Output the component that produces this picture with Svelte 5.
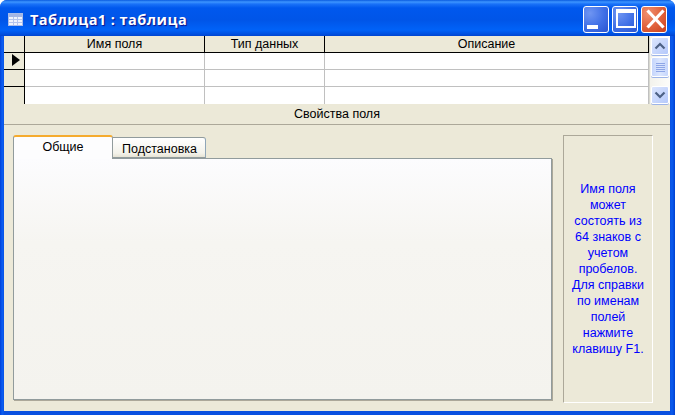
<script>
  const help = ['Имя поля','может','состоять из','64 знаков с','учетом','пробелов.','Для справки','по именам','полей','нажмите','клавишу F1.'];
  const rows = [0,1,2];
</script>

<div class="window">
  <header class="title">
    <svg class="icon" width="15" height="13" viewBox="0 0 15 13">
      <rect x="0.5" y="0.5" width="14" height="12" fill="#f0f3fc" stroke="#a9bbe8"/>
      <rect x="1" y="1" width="13" height="3" fill="#a3b5e4"/>
      <path d="M1 6.5h13M1 9.5h13M5.5 4v8M9.5 4v8" stroke="#b5c5ee" stroke-width="1" fill="none"/>
    </svg>
    <span class="caption">Таблица1 : таблица</span>
    <div class="controls">
      <button class="ctl" aria-label="min"><svg width="26" height="27" viewBox="0 0 26 27"><rect x="4" y="19" width="11" height="4" fill="#fff"/></svg></button>
      <button class="ctl" aria-label="max"><svg width="26" height="27" viewBox="0 0 26 27"><rect x="5" y="4" width="18" height="17" fill="none" stroke="#fff" stroke-width="2"/><rect x="4" y="3" width="20" height="4" fill="#fff"/></svg></button>
      <button class="ctl close" aria-label="close"><svg width="26" height="27" viewBox="0 0 26 27"><path d="M6.5 4.5L22.5 21.5M22.5 4.5L6.5 21.5" stroke="#fff" stroke-width="3.2" stroke-linecap="butt" fill="none"/></svg></button>
    </div>
  </header>

  <div class="client">
    <div class="gridwrap">
      <div class="grid">
        <div class="hd"></div>
        <div class="hd">Имя поля</div>
        <div class="hd">Тип данных</div>
        <div class="hd">Описание</div>
        {#each rows as r}
          <div class="cell-sel" class:end={r === 2}>
            {#if r === 0}
              <svg class="arrow" width="8" height="12" viewBox="0 0 8 12"><path d="M0 0L8 6L0 12Z" fill="#000"/></svg>
            {/if}
          </div>
          <div class="cell" class:end={r === 2}></div>
          <div class="cell" class:end={r === 2}></div>
          <div class="cell" class:end={r === 2}></div>
        {/each}
      </div>
      <div class="scroll">
        <div class="sbtn"><svg width="14" height="10" viewBox="0 0 14 10"><path d="M2.5 7.5L7 3L11.5 7.5" fill="none" stroke="#4d6185" stroke-width="2.2"/></svg></div>
        <div class="thumb"><svg width="9" height="9" viewBox="0 0 9 9"><path d="M0 .5h9M0 2.5h9M0 4.5h9M0 6.5h9M0 8.5h9" stroke="#8ea6e6" stroke-width="1"/></svg></div>
        <div class="track"></div>
        <div class="sbtn"><svg width="14" height="10" viewBox="0 0 14 10"><path d="M2.5 2.5L7 7L11.5 2.5" fill="none" stroke="#4d6185" stroke-width="2.2"/></svg></div>
      </div>
    </div>

    <div class="band">Свойства поля</div>

    <div class="lower">
      <div class="tabs">
        <div class="tabbar">
          <div class="tab active">Общие</div>
          <div class="tab">Подстановка</div>
        </div>
        <div class="panel"></div>
      </div>
      <div class="help">
        <div>
          {#each help as line}
            <div class="hl">{line}</div>
          {/each}
        </div>
      </div>
    </div>
  </div>
</div>

<style>
  :global(body) { margin: 0; background: #fff; }
  .window {
    width: 675px; height: 415px; box-sizing: border-box;
    display: flex; flex-direction: column;
    padding: 0 5px 4px 4px;
    border-radius: 7px 7px 0 0;
    overflow: hidden;
    background: linear-gradient(90deg, #0040d8 0, #0a5cf0 2px, #0a5cf0 3px, #0a50e0 4px, #0a50e0 670px, #0a5cf0 672px, #0040d0 675px);
    font-family: "Liberation Sans", Arial, sans-serif;
    font-size: 12.5px;
    color: #000;
  }
  .title {
    height: 36px; flex: none; box-sizing: border-box;
    margin: 0 -5px 0 -4px;
    padding: 6px 8px 0 8px;
    display: flex; align-items: flex-start;
    background: linear-gradient(180deg, #0a5be0 0, #3d95ff 2px, #1a72f8 4px, #0058ee 8px, #0055e8 20px, #0062f8 30px, #0050e0 34px, #0044d0 36px);
  }
  .icon { margin-top: 7px; flex: none; }
  .caption {
    margin-left: 7px; margin-top: 4px;
    font-family: "Open Sans", "Noto Sans", sans-serif;
    font-weight: 700; font-size: 14.5px; line-height: 20px;
    letter-spacing: 0.45px;
    color: #fff;
    text-shadow: 1px 1px 1px #0f1089;
  }
  .controls { margin-left: auto; display: flex; gap: 3px; }
  .ctl {
    width: 26px; height: 27px; padding: 0; box-sizing: border-box;
    border: 1px solid #fff; border-radius: 3px;
    background: radial-gradient(circle at 25% 25%, #6f95f2 0, #3f6fe6 55%, #2a54d0 100%);
    position: relative; display: block;
  }
  .ctl svg { position: absolute; left: -1px; top: -1px; }
  .close { background: radial-gradient(circle at 25% 25%, #f09070 0, #e0603a 55%, #c8401c 100%); }

  .client { flex: 1; display: flex; flex-direction: column; background: #ece9d8; min-height: 0; }
  .gridwrap { display: flex; height: 68px; flex: none; }
  .grid {
    flex: 1;
    display: grid;
    grid-template-columns: 21px 180px 120px 1fr;
    grid-template-rows: 17px 17px 17px 17px;
    background: #fff;
  }
  .hd {
    background: #ece9d8; text-align: center; line-height: 17px;
    border-right: 1px solid #000; border-bottom: 1px solid #000;
    box-sizing: border-box;
  }
  .cell { box-sizing: border-box; border-right: 1px solid #c0c0c0; border-bottom: 1px solid #c0c0c0; }
  .cell.end { border-bottom: none; }
  .cell-sel {
    box-sizing: border-box;
    background: #ece9d8; border-right: 1px solid #000; border-bottom: 1px solid #000;
    display: flex; align-items: flex-start; padding: 1px 0 0 8px;
  }
  .cell-sel.end { border-bottom: none; }
  .scroll {
    width: 21px; flex: none; display: flex; flex-direction: column; align-items: center;
    padding-top: 1px; box-sizing: border-box;
    background: linear-gradient(90deg, #f3f2ec, #fdfdfa);
    border-left: 1px solid #d8d8d0;
  }
  .sbtn, .thumb {
    width: 18px; box-sizing: border-box; border: 1px solid #fff; border-radius: 2px;
    background: linear-gradient(135deg, #dbe5fd, #b5c9fb);
    box-shadow: 0 1px 0 #9db4e8;
    display: flex; align-items: center; justify-content: center;
  }
  .sbtn { height: 18px; }
  .thumb { height: 20px; margin-top: 2px; background: linear-gradient(90deg, #c6d6fc, #dbe6fe, #c6d6fc); }
  .track { flex: 1; }

  .band {
    height: 21px; flex: none; box-sizing: border-box; text-align: center; line-height: 21px;
    border-bottom: 1px solid #aca899;
  }
  .lower {
    flex: 1; min-height: 0; display: flex; align-items: flex-start;
    padding: 10px 17px 0 9px;
  }
  .tabs { width: 540px; display: flex; flex-direction: column; }
  .tabbar { display: flex; align-items: flex-end; height: 23px; position: relative; z-index: 1; }
  .tab {
    box-sizing: border-box; width: 93px; height: 21px; text-align: center; line-height: 22px; padding-left: 1px;
    border: 1px solid #919b9c; border-left: none; border-right-color: #8fa6b8;
    border-radius: 0 3px 0 0;
    background: linear-gradient(180deg, #fff, #f3f2ea 80%, #e6e3d4);
  }
  .tab.active {
    width: 100px; height: 24px; margin-bottom: -1px; line-height: 21px; padding-left: 0;
    border: 1px solid #919b9c; border-bottom: none; border-top: 2px solid #f5ab2e;
    border-radius: 3px 3px 0 0;
    background: #fdfdfe;
  }
  .panel {
    height: 242px; box-sizing: border-box;
    border: 1px solid #919b9c;
    box-shadow: 1px 1px 0 #aca899;
    background: linear-gradient(180deg, #fcfcfe, #f6f5f1 35%, #f4f3ee);
  }
  .help {
    width: 90px; height: 268px; margin-left: 11px; box-sizing: border-box; flex: none;
    border: 1px solid; border-color: #aca899 #fff #fff #aca899;
    color: #0000ff; text-align: center;
    display: flex; align-items: center; justify-content: center;
  }
  .hl { line-height: 16px; white-space: nowrap; }
</style>
